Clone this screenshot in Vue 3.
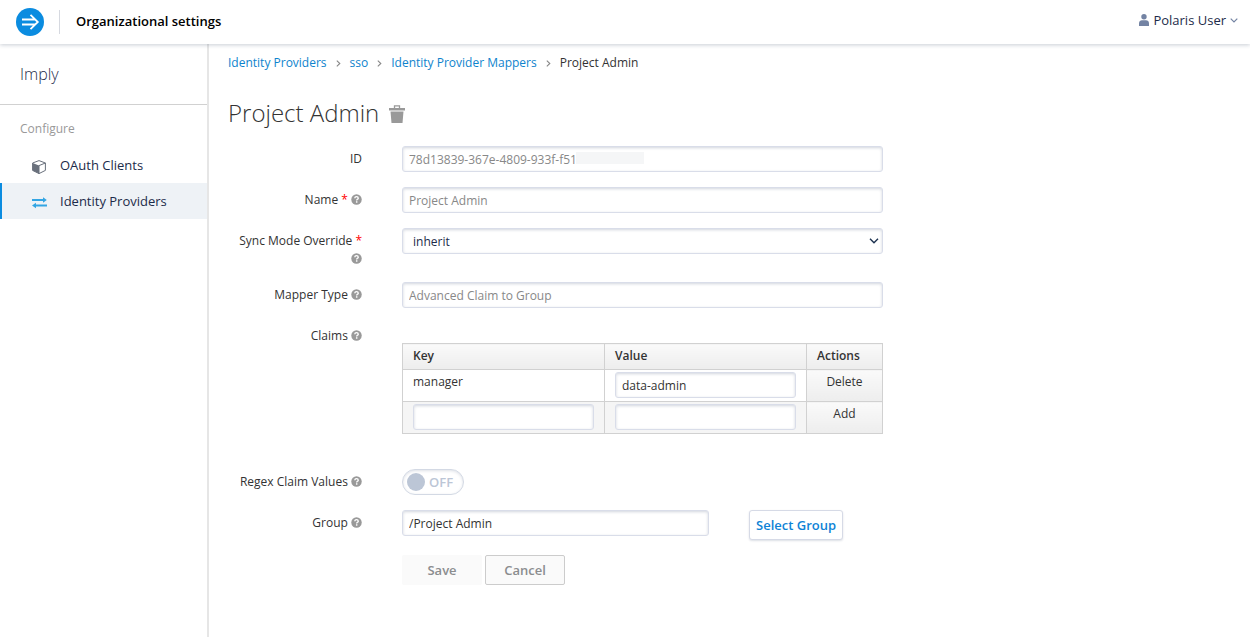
<script setup>
import { ref } from 'vue'

const crumbs = ['Identity Providers', 'sso', 'Identity Provider Mappers']
const id = ref('78d13839-367e-4809-933f-f51')
const name = ref('Project Admin')
const syncMode = ref('inherit')
const mapperType = ref('Advanced Claim to Group')
const claimValue = ref('data-admin')
const newKey = ref('')
const newValue = ref('')
const regex = ref(false)
const group = ref('/Project Admin')
</script>

<template>
  <div class="page">
    <svg class="sprites" aria-hidden="true">
      <symbol id="help" viewBox="0 0 12 12">
        <circle cx="6" cy="6" r="5.7" fill="#999" />
        <path d="M4.100 4.700C4.200 3.500 5 2.900 6 2.900c1.100 0 1.900.6 1.900 1.600 0 1.300-1.700 1.200-1.700 2.500" fill="none" stroke="#fff" stroke-width="1.500" />
        <rect x="5.400" y="7.900" width="1.600" height="1.600" fill="#fff" />
      </symbol>
    </svg>

    <header class="topbar">
      <svg class="logo" viewBox="0 0 28 28" aria-hidden="true">
        <circle cx="14" cy="14" r="14" fill="#0b8ce0" />
        <path d="M6 11.500h13.300M6 16.500h13.300M14.500 6.800l7.300 7.200-7.300 7.200" fill="none" stroke="#fff" stroke-width="1.800" />
      </svg>
      <h2 class="org">Organizational settings</h2>
      <button class="user" type="button">
        <svg width="10" height="12" viewBox="0 0 10 12" aria-hidden="true">
          <circle cx="5" cy="2.800" r="2.700" fill="#7383a3" />
          <path d="M0 12V9.400C0 7.400 1.400 6.200 3 6.200H7C8.600 6.200 10 7.400 10 9.400V12z" fill="#7383a3" />
        </svg>
        <span>Polaris User</span>
        <svg width="8" height="6" viewBox="0 0 8 6" aria-hidden="true">
          <path d="M.7 1.700 4 5 7.300 1.700" fill="none" stroke="#7383a3" stroke-width="1.200" />
        </svg>
      </button>
    </header>

    <div class="body">
      <nav class="sidebar">
        <div class="realm">Imply</div>
        <h3 class="section">Configure</h3>
        <a class="item" href="#clients">
          <svg width="16" height="16" viewBox="0 0 16 16" aria-hidden="true">
            <path d="M8 1.600 14.400 4v7.400L8 14.600 1.600 11.400V4z" fill="#fff" stroke="#69707c" stroke-width="1" />
            <path d="M1.600 4 8 6.600v8L1.600 11.400z" fill="#69707c" />
            <path d="M8 6.600 14.400 4M8 6.600v8" stroke="#69707c" fill="none" />
          </svg>
          <span>OAuth Clients</span>
        </a>
        <a class="item active" href="#providers">
          <svg width="16" height="16" viewBox="0 0 16 16" aria-hidden="true">
            <path d="M1 5h12M3 10.500h13" stroke="#33a5e3" stroke-width="1.800" />
            <path d="M12 2.300 15.800 5 12 7.700zM5 7.800 1 10.500l4 2.700z" fill="#33a5e3" />
          </svg>
          <span>Identity Providers</span>
        </a>
      </nav>

      <main class="content">
        <nav class="crumbs" aria-label="Breadcrumb">
          <template v-for="c in crumbs" :key="c">
            <a href="#crumb">{{ c }}</a>
            <svg width="5" height="8" viewBox="0 0 5 8" aria-hidden="true">
              <path d="M.8 1.700 3.800 4.500 .8 7.300" fill="none" stroke="#888" stroke-width="1.100" />
            </svg>
          </template>
          <span>Project Admin</span>
        </nav>

        <div class="title">
          <h1>Project Admin</h1>
          <button class="trash" type="button" aria-label="Delete mapper">
            <svg width="16" height="18" viewBox="0 0 16 18" aria-hidden="true">
              <path d="M0 3h16v2.500H0zM1.500 6.500h13L13.500 18h-11z" fill="#999" />
              <path d="M5.500 3V.8h5V3" fill="none" stroke="#999" stroke-width="1.300" />
            </svg>
          </button>
        </div>

        <form @submit.prevent>
          <div class="row">
            <label for="id">ID</label>
            <div class="field">
              <input id="id" v-model="id" class="text" type="text" disabled>
              <span class="mask"></span>
            </div>
          </div>
          <div class="row">
            <label for="name">Name <b>*</b> <svg class="help"><use href="#help" /></svg></label>
            <input id="name" v-model="name" class="text" type="text" disabled>
          </div>
          <div class="row sync">
            <label for="sync">Sync Mode Override <b>*</b> <svg class="help"><use href="#help" /></svg></label>
            <div class="field">
              <select id="sync" v-model="syncMode" class="text">
                <option>inherit</option>
                <option>import</option>
                <option>force</option>
              </select>
              <svg class="caret" width="10" height="6" viewBox="0 0 10 6" aria-hidden="true">
                <path d="M1 .8 5 4.800 9 .8" fill="none" stroke="#1c3250" stroke-width="1.400" />
              </svg>
            </div>
          </div>
          <div class="row">
            <label for="type">Mapper Type <svg class="help"><use href="#help" /></svg></label>
            <input id="type" v-model="mapperType" class="text" type="text" disabled>
          </div>
          <div class="row claims">
            <label id="claims">Claims <svg class="help"><use href="#help" /></svg></label>
            <table aria-labelledby="claims">
              <thead>
                <tr><th>Key</th><th>Value</th><th class="act">Actions</th></tr>
              </thead>
              <tbody>
                <tr>
                  <td>manager</td>
                  <td class="in"><input v-model="claimValue" class="text" type="text" aria-label="Value"></td>
                  <td class="do"><button type="button">Delete</button></td>
                </tr>
                <tr class="new">
                  <td class="in"><input v-model="newKey" class="text" type="text" aria-label="New key"></td>
                  <td class="in"><input v-model="newValue" class="text" type="text" aria-label="New value"></td>
                  <td class="do"><button type="button">Add</button></td>
                </tr>
              </tbody>
            </table>
          </div>
          <div class="row">
            <label for="regex">Regex Claim Values <svg class="help"><use href="#help" /></svg></label>
            <div class="switch" :class="{ on: regex }">
              <input id="regex" v-model="regex" type="checkbox">
              <span class="knob"></span>
              <span>{{ regex ? 'ON' : 'OFF' }}</span>
            </div>
          </div>
          <div class="row">
            <label for="group">Group <svg class="help"><use href="#help" /></svg></label>
            <div class="group">
              <input id="group" v-model="group" class="text" type="text">
              <button class="select" type="button">Select Group</button>
            </div>
          </div>
          <div class="actions">
            <button class="btn" type="submit" disabled>Save</button>
            <button class="btn cancel" type="button" disabled>Cancel</button>
          </div>
        </form>
      </main>
    </div>
  </div>
</template>

<style>
body { background: #fff; }
</style>

<style scoped>
.page {
  display: flex;
  flex-direction: column;
  box-sizing: border-box;
  min-height: 100vh;
  padding-bottom: 3px;
  font: 12px/18px "Open Sans", "Noto Sans", sans-serif;
  color: #333;
}
.page *, .page *::before { box-sizing: border-box; }
button, input, select { font: inherit; color: inherit; margin: 0; }
button { border: 0; padding: 0; background: none; cursor: pointer; }
a { text-decoration: none; }
h1, h2, h3 { margin: 0; }
.sprites { position: absolute; width: 0; height: 0; }

.topbar {
  position: relative;
  display: flex;
  align-items: center;
  height: 44px;
  padding: 0 12px 0 16px;
  background: #fff;
  box-shadow: 0 1px 4px rgba(30, 50, 80, 0.24);
}
.logo { width: 28px; height: 28px; }
.org {
  margin-left: 15px;
  padding: 0 0 2px 16px;
  border-left: 1px solid #d6d9e0;
  font-size: 13px;
  font-weight: 600;
  line-height: 22px;
  color: #000;
}
.user {
  display: flex;
  align-items: center;
  gap: 4px;
  margin-left: auto;
  padding-bottom: 4px;
  font-size: 13px;
  color: #1c2b4a;
}

.body { display: flex; flex: 1; }
.sidebar { flex: 0 0 209px; border-right: 2px solid #e6e6e6; }
.realm {
  height: 61px;
  padding: 18px 20px;
  border-bottom: 1px solid #d1d1d1;
  font-size: 16px;
  font-weight: 300;
  line-height: 24px;
  color: #1c2b4a;
}
.section {
  padding: 15px 20px 9px;
  font-size: 12px;
  font-weight: 400;
  color: #999;
}
.item {
  display: flex;
  align-items: center;
  gap: 13px;
  height: 36px;
  padding-left: 31px;
  font-size: 13px;
  color: #1c2b4a;
}
.item svg { margin-top: 3px; }
.active { padding-left: 29px; border-left: 2px solid #0b8ce0; background: #eef2f6; }

.content { flex: 1; min-width: 0; padding: 10px 20px 20px 19px; }
.crumbs { display: flex; align-items: center; gap: 9px; }
.crumbs a { color: #0e83cd; }
.title { display: flex; align-items: center; gap: 10px; margin: 24px 0 16px; }
h1 { font-size: 24px; font-weight: 300; line-height: 34px; }
.trash { padding-top: 2px; }
.trash, .trash svg { display: block; }

form { display: flex; flex-direction: column; gap: 15px; }
.row {
  display: grid;
  grid-template-columns: 134px minmax(0, 481px);
  column-gap: 40px;
  align-items: start;
}
label { padding-top: 4px; text-align: right; }
b { font-weight: 400; color: #f00; }
.help { width: 11px; height: 11px; vertical-align: -1px; }
.field { position: relative; }
.text {
  display: block;
  width: 100%;
  height: 26px;
  padding: 0 6px;
  border: 1px solid #d9dde9;
  border-radius: 3px;
  background: #fff;
  box-shadow: inset 0 1px 3px rgba(30, 50, 90, 0.2);
}
.text:disabled { color: #888; }
select.text { appearance: none; padding: 1px 10px 0; color: #1c2b4a; }
.caret { position: absolute; right: 4px; top: 10px; pointer-events: none; }
.mask {
  position: absolute;
  left: 174px;
  top: 6px;
  width: 68px;
  height: 12px;
  background: #f5f6f7;
}
.sync { margin-bottom: -1px; }

table {
  width: 100%;
  margin-top: 20px;
  border-collapse: collapse;
  table-layout: fixed;
}
th, td { padding: 3px 10px; border: 1px solid #d1d1d1; text-align: left; vertical-align: top; }
th { height: 26px; font-weight: 600; background: linear-gradient(#fafafa, #ededed); }
.act { width: 76px; }
td { height: 32px; }
td.in { padding: 2px 10px; }
.new td { background: #f5f5f5; }
td.do, .new td.do { padding: 3px 0; text-align: center; background: linear-gradient(#fafafa, #ededed); }
.do button { display: block; width: 100%; }
.claims { margin-bottom: 20px; }

.switch {
  position: relative;
  display: flex;
  align-items: center;
  gap: 4px;
  width: 62px;
  height: 26px;
  padding: 0 4px;
  border: 1px solid #d3d9e4;
  border-radius: 13px;
  box-shadow: inset 0 1px 3px rgba(30, 50, 90, 0.15);
  font-size: 13px;
  font-weight: 600;
  color: #bcc6d6;
}
.switch input { position: absolute; inset: 0; width: 100%; height: 100%; opacity: 0; cursor: pointer; }
.knob { width: 18px; height: 18px; border-radius: 50%; background: #bcc6d6; }
.on { flex-direction: row-reverse; color: #0b8ce0; }
.on .knob { background: #0b8ce0; }

.group { display: flex; align-items: flex-start; gap: 40px; }
.group .text { flex: 0 1 307px; min-width: 0; }
.select {
  flex: none;
  height: 30px;
  padding: 0 6px;
  border: 1px solid #d6dae6;
  border-radius: 3px;
  background: #fff;
  box-shadow: 0 1px 2px rgba(30, 50, 90, 0.15);
  font-size: 13px;
  font-weight: 600;
  color: #0e83d6;
}
.actions { display: flex; gap: 3px; margin-left: 174px; }
.btn {
  width: 80px;
  height: 30px;
  border-radius: 2px;
  background: #fafafa;
  font-size: 13px;
  font-weight: 600;
  color: #8b8d8f;
}
.cancel { border: 1px solid #ccc; }
</style>
